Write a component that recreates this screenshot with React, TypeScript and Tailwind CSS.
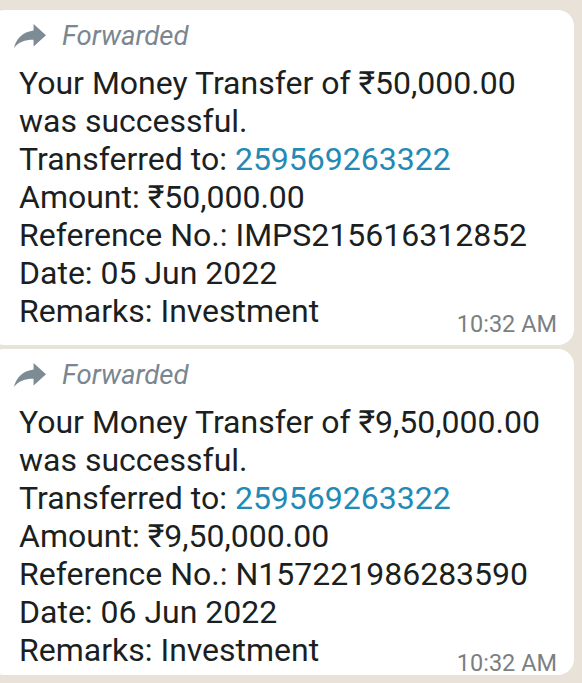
const FONT = { fontFamily: "Roboto, 'Noto Sans', sans-serif" };

type Msg = {
  amount: string;
  account: string;
  reference: string;
  date: string;
  time: string;
};

const messages: Msg[] = [
  {
    amount: "₹50,000.00",
    account: "259569263322",
    reference: "IMPS215616312852",
    date: "05 Jun 2022",
    time: "10:32 AM",
  },
  {
    amount: "₹9,50,000.00",
    account: "259569263322",
    reference: "N157221986283590",
    date: "06 Jun 2022",
    time: "10:32 AM",
  },
];

function ForwardIcon() {
  return (
    <svg viewBox="3 5 18 15" className="h-[24px] w-[32px]" fill="#7d8b95" preserveAspectRatio="none">
      <path d="M14 9V5l7 7-7 7v-4.1c-5 0-8.5 1.6-11 5.1 1-5 4-10 11-11z" />
    </svg>
  );
}

function Bubble({ m, last }: { m: Msg; last?: boolean }) {
  return (
    <div
      className={`-ml-[12px] mr-[8px] rounded-[16px] bg-white pl-[31px] pr-[17px] pt-[9px] ${
        last ? "pb-[6px]" : "pb-[15px]"
      }`}
    >
      <div className="-ml-[5px] flex h-[34px] items-center gap-[16px]">
        <ForwardIcon />
        <span className="text-[27.5px] italic text-[#7a8690]">Forwarded</span>
      </div>
      <div className="mt-[11px] text-[32px] leading-[38px] text-[#1b1f22]">
        <div>Your Money Transfer of {m.amount}</div>
        <div>was successful.</div>
        <div>
          Transferred to: <span className="text-[#2389b5]">{m.account}</span>
        </div>
        <div>Amount: {m.amount}</div>
        <div>Reference No.: {m.reference}</div>
        <div>Date: {m.date}</div>
        <div className="flex items-end justify-between">
          <span>Remarks: Investment</span>
          <span className="-mb-[6px] text-[23.5px] leading-[24px] text-[#7b7f82]">{m.time}</span>
        </div>
      </div>
    </div>
  );
}

export default function App() {
  return (
    <div
      className="flex h-[683px] w-[582px] flex-col gap-[4px] overflow-hidden bg-[#e9e2d8] pt-[10px]"
      style={FONT}
    >
      {messages.map((m, i) => (
        <Bubble key={i} m={m} last={i === messages.length - 1} />
      ))}
    </div>
  );
}
